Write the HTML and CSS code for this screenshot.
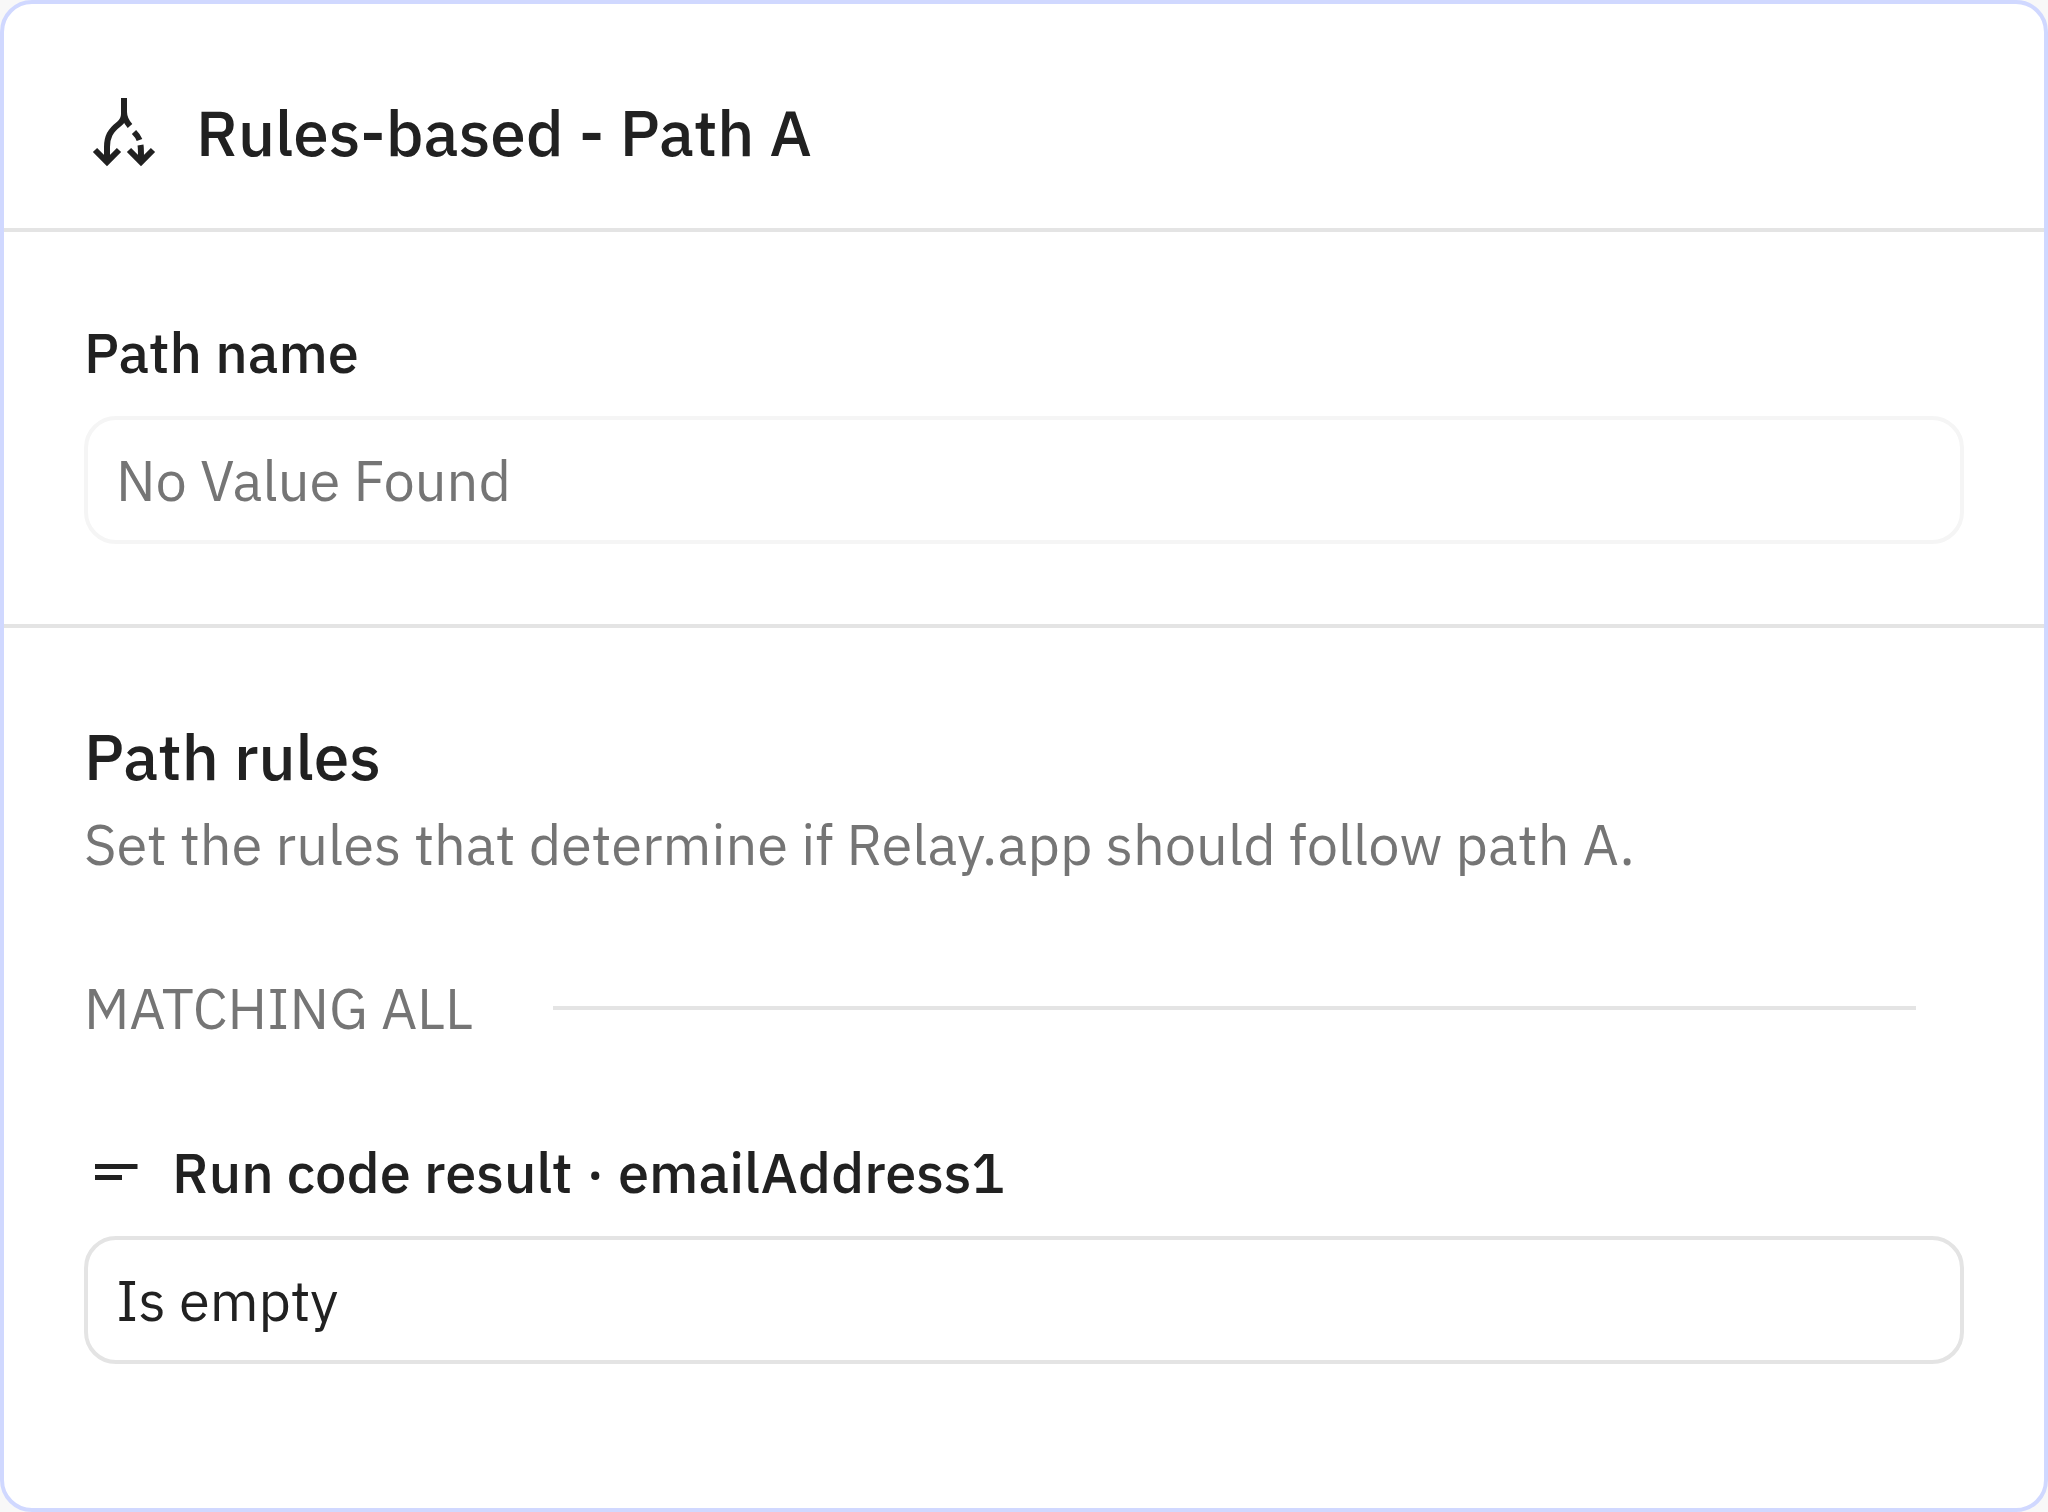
FILE: index.html
```html
<!DOCTYPE html>
<html lang="en">
<head>
	<meta charset="UTF-8">
	<title>Rules-based - Path A</title>
	<link rel="stylesheet" href="styles.css">
</head>
<body>
	<main class="card">
		<header class="card-header">
			<svg class="icon-path" viewBox="0 0 80 80" aria-hidden="true">
				<path d="M40 6v16q0 6-5 10C26 39 23 45 23 55v11"/>
				<path d="M40 20q0 7 6 14M50 40q4 4 5.500 8M56.500 53q.5 3 .5 13"/>
				<path d="M11 58l12 12 12-12M45 58l12 12 12-12"/>
			</svg>
			<h1 class="title">Rules-based - Path A</h1>
		</header>

		<section class="section">
			<label class="label" for="path-name">Path name</label>
			<input class="field field-light" type="text" id="path-name" placeholder="No Value Found">
		</section>

		<section class="section">
			<h2 class="title">Path rules</h2>
			<p class="text">Set the rules that determine if Relay.app should follow path A.</p>
			<div class="matching">
				<span class="text">MATCHING ALL</span>
				<hr class="rule">
			</div>
			<label class="label" for="condition">
				<svg class="icon-text" viewBox="0 0 64 64" aria-hidden="true">
					<path d="M11 26.500h42.500M11 37.500h27"/>
				</svg>
				Run code result · emailAddress1
			</label>
			<input class="field" type="text" id="condition" value="Is empty">
		</section>
	</main>
</body>
</html>
```
FILE: styles.css
```css
*{
	margin: 0;
	padding: 0;
	box-sizing: border-box;
}
body{
	background-color: #f8f8f8;
	color: #212121;
	font-family: "IBM Plex Sans", Roboto, sans-serif;
	font-size: 56px;
	line-height: 80px;
}
.card{
	min-height: 100vh;
	border: 4px solid #d0d8ff;
	border-radius: 32px;
	background-color: #fff;
}
.card-header{
	display: flex;
	align-items: center;
	gap: 32px;
	padding: 80px 80px 48px;
}
.title{
	font-size: 64px;
	font-weight: 500;
	line-height: 96px;
}
.section{
	padding: 80px;
	border-top: 4px solid #e4e4e4;
}
.label{
	display: flex;
	align-items: center;
	gap: 24px;
	margin-bottom: 24px;
	font-weight: 500;
}
.text{
	color: #757575;
}
.field{
	display: block;
	width: 100%;
	height: 128px;
	padding: 0 28px;
	border: 4px solid #e4e4e4;
	border-radius: 32px;
	background-color: transparent;
	color: inherit;
	font: inherit;
}
.field-light{
	border-color: #f5f5f5;
}
.field::placeholder{
	color: #757575;
	opacity: 1;
}
.matching{
	display: flex;
	align-items: center;
	gap: 80px;
	margin: 84px 48px 84px 0;
}
.rule{
	flex: 1;
	border: 0;
	border-top: 4px solid #e4e4e4;
}

/* icons */
.icon-path,
.icon-text{
	flex: none;
	fill: none;
	stroke: currentColor;
}
.icon-path{
	width: 80px;
	height: 80px;
	stroke-width: 6;
}
.icon-text{
	width: 64px;
	height: 64px;
	stroke-width: 5;
}
```
